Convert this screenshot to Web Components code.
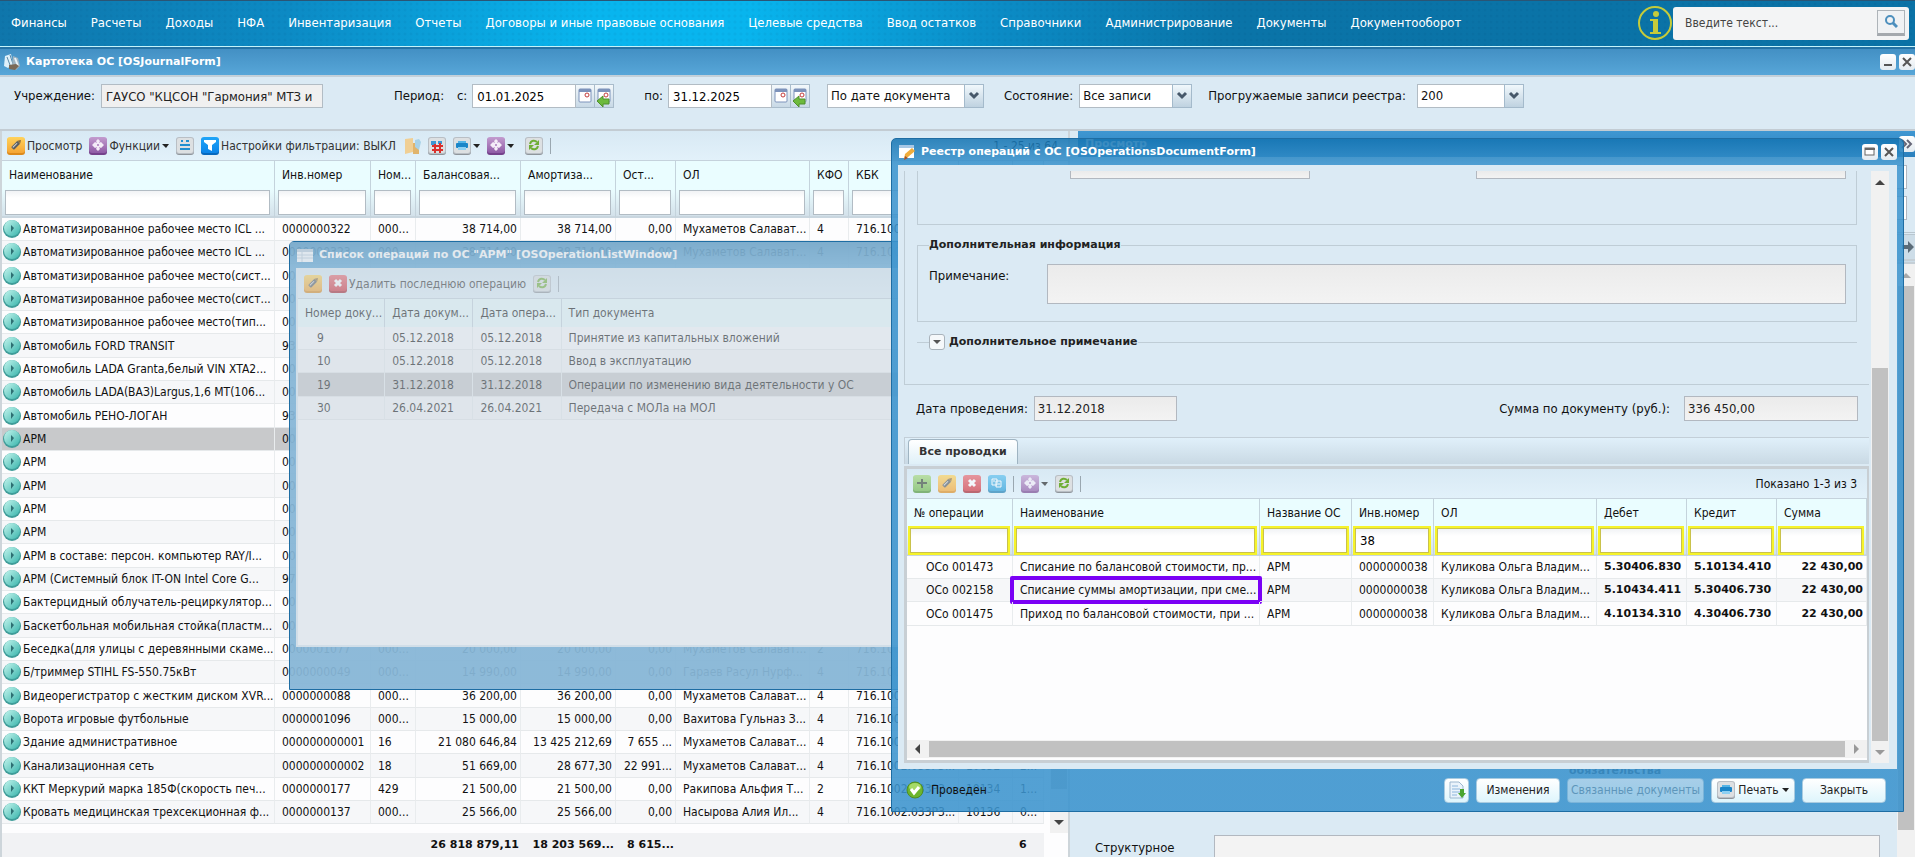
<!DOCTYPE html>
<html lang="ru">
<head>
<meta charset="utf-8">
<title>Картотека ОС</title>
<style>
  html, body{
    height: 100%;
    margin: 0;
  }
  body{
    overflow: hidden;
    font: 12px/16px "DejaVu Sans Condensed", "DejaVu Sans", sans-serif;
    color: #111;
    background: #dbeaf4;
  }
</style>
</head>
<body>
<app-desktop></app-desktop>

<script>
const ICONS = {
  base: (top, bottom, edge, mark) => `
    <defs><linearGradient id="g" x1="0" y1="0" x2="0" y2="1"><stop offset="0" stop-color="${top}"/><stop offset="1" stop-color="${bottom}"/></linearGradient></defs>
    <rect x="0" y="1" width="18" height="17" rx="3" fill="${edge}"/>
    <rect x="0" y="0" width="18" height="16" rx="3" fill="url(#g)"/>${mark}`,
};
const grayBase = mark => `
    <rect x="0" y="1" width="18" height="17" rx="3" fill="#8f959b"/>
    <rect x="0" y="0" width="18" height="17" rx="3" fill="#b9bfc5"/>
    <rect x="1" y="1" width="16" height="15" rx="2" fill="#dde0e2"/>${mark}`;

ICONS.edit = ICONS.base('#ffd35c', '#f5a535', '#dd8a1c', '<g transform="rotate(-45 9 8)"><rect x="4" y="6" width="9" height="4" rx="1" fill="#5b5f63"/><rect x="5" y="7" width="6" height="1" fill="#d8d8d8"/><path d="M13 6l3 2-3 2z" fill="#8a6a3a"/></g>');
ICONS.func = ICONS.base('#c39ccf', '#8f5aa5', '#75418b', '<path d="M9 2l2 2-1 2 2-1 3 3-3 3-2-1 1 2-2 2-2-2 1-2-2 1-3-3 3-3 2 1-1-2z" fill="#f4ecf7"/><circle cx="9" cy="8" r="1" fill="#a878bb"/>');
ICONS.add = ICONS.base('#a8d87e', '#6fb54a', '#4f9434', '<path d="M9 4v9M4 8h10" stroke="#3d4b38" stroke-width="2"/>');
ICONS.remove = ICONS.base('#ec6a70', '#d3323c', '#a81f2a', '<path d="M6 5l6 6M12 5l-6 6" stroke="#fff" stroke-width="3"/>');
ICONS.copy = ICONS.base('#5cc0ee', '#259bd6', '#1b7cb0', '<path d="M4 4h5v6H4zM8 6h5v6H8z" fill="#4db0e0" stroke="#fff"/><path d="M5 6h2M10 9h2" stroke="#fff"/>');
ICONS.filter = ICONS.base('#1fa5f8', '#0b84e8', '#0668bd', '<path d="M3 3h12v2l-4 3v6l-4-2V8L3 5z" fill="#fff"/>');
ICONS.list = grayBase('<path d="M5 4h2M10 4h3" stroke="#1f8fd0" stroke-width="2"/><path d="M4 8h10M4 12h10" stroke="#1f8fd0" stroke-width="2"/>');
ICONS.table = grayBase('<path d="M3 4h5v4H3zM10 4h4v3h-4z" fill="#3a97d3"/><path d="M7 7v9M12 6v10M4 9h11M4 13h11" stroke="#d9302c" stroke-width="2"/>');
ICONS.print = grayBase('<path d="M5 4h8v2H5z" fill="#55b4e6"/><rect x="3" y="6" width="12" height="5" rx="1" fill="#1b86c8"/><path d="M5 10h8v3H5z" fill="#8ed0f2"/>');
ICONS.refresh = grayBase('<path d="M5 7c1-4 5-4 7-2M13 9c-1 4-5 4-7 2" fill="none" stroke="#6fae35" stroke-width="2"/><path d="M14 3v5H9zM4 13V8h5z" fill="#6fae35"/>');
ICONS.folder = '<path d="M2 2l8-1v14l-8 2z" fill="#f0cf94"/><path d="M10 6h6v11H10z" fill="#e0b46c"/><path d="M12 3l4-1 2 3-2 8-4-3z" fill="#a9d2e8"/>';
ICONS.go = '<defs><linearGradient id="g" x1="0" y1="0" x2="1" y2="1"><stop offset="0" stop-color="#c6f5ee"/><stop offset="1" stop-color="#39b5ac"/></linearGradient></defs><circle cx="9" cy="9" r="9" fill="#3f9c99"/><circle cx="9" cy="8" r="8" fill="url(#g)"/><path d="M8 5l3 3-3 4z" fill="#2d6f72"/>';
ICONS.ok = '<circle cx="9" cy="9" r="8" fill="#6cb52d" stroke="#4f8d22"/><ellipse cx="9" cy="6" rx="6" ry="4" fill="#a5da68"/><path d="M5 8l3 4 5-6" fill="none" stroke="#fff" stroke-width="3"/>';
ICONS.cabinet = '<path d="M2 3l6-2 2 10-5 4-4-2z" fill="#dff0fa"/><path d="M4 4l3 8M7 2l3 9" stroke="#5b8aa8"/><path d="M10 3l5 2 2 8-4 4-4-3z" fill="#9fb4c2"/><path d="M12 5l3 8" stroke="#e9f2f8" stroke-width="2"/><path d="M6 12l7-1 3 2-4 4-6-1z" fill="#7b6a58"/>';
ICONS.form = '<rect x="1" y="2" width="15" height="13" fill="#fff"/><rect x="1" y="2" width="15" height="3" fill="#a8c8e6"/><path d="M6 16l1-5 7-6 3 3-7 6z" fill="#f0ad3c"/><path d="M6 17l1-4 3 2z" fill="#a0522d"/>';
ICONS.sheet = '<rect x="1" y="3" width="16" height="13" fill="#f7fbff"/><rect x="1" y="3" width="16" height="3" fill="#b4c9da"/><path d="M1 9h16M1 12h16M6 6v10" stroke="#b8cbd9"/>';
ICONS.export = '<path d="M2 1h9l4 4v12H2z" fill="#eaf3fb" stroke="#9db8cf"/><path d="M4 5h6M4 8h8M4 11h8M4 14h5" stroke="#8cb6dc"/><path d="M12 8h4v4h2l-4 5-4-5h2z" fill="#4aa52e"/>';

const CARET = '<svg class="caret" width="7" height="4" viewBox="0 0 7 4"><path d="M0 0h7L4 4z" fill="#222"/></svg>';

class AppIcon extends HTMLElement{
  connectedCallback(){
    const shadowRoot = this.attachShadow({mode:'open'});
    shadowRoot.innerHTML = `
    <style>
      :host{ display: block; flex: none; width: 18px; height: 18px; }
      svg{ display: block; }
    </style>
    <svg width="18" height="18" viewBox="0 0 18 18">${ICONS[this.getAttribute('name')]}</svg>`;
  }
}
customElements.define('app-icon', AppIcon);

class ToolButton extends HTMLElement{
  connectedCallback(){
    const shadowRoot = this.attachShadow({mode:'open'});
    const off = this.hasAttribute('off');
    shadowRoot.innerHTML = `
    <style>
      :host{ display: block; flex: none; }
      button{
        display: flex;
        align-items: center;
        gap: 2px;
        padding: 0;
        border: 0;
        background: none;
        font: inherit;
        color: #333;
        white-space: nowrap;
      }
      button:disabled{ opacity: .65; }
    </style>
    <button type="button" ${off ? 'disabled' : ''}>
      <app-icon name="${this.getAttribute('icon')}"></app-icon>
      <slot></slot>
      ${this.hasAttribute('menu') ? CARET : ''}
    </button>`;
  }
}
customElements.define('tool-button', ToolButton);

class ToolBar extends HTMLElement{
  connectedCallback(){
    const shadowRoot = this.attachShadow({mode:'open'});
    shadowRoot.innerHTML = `
    <style>
      :host{
        display: flex;
        align-items: center;
        gap: 7px;
        flex: none;
        box-sizing: border-box;
        height: 30px;
        padding: 0 6px;
        border-bottom: 1px solid #c5d2dc;
        background: linear-gradient(#d8e9f4, #e2f1fa);
      }
      ::slotted(hr){
        width: 1px;
        height: 16px;
        margin: 0;
        border: 0;
        background: #9aa7b0;
      }
      ::slotted(output){
        margin-left: auto;
        padding-right: 4px;
      }
    </style>
    <slot></slot>`;
  }
}
customElements.define('tool-bar', ToolBar);

class ScrollBar extends HTMLElement{
  connectedCallback(){
    const shadowRoot = this.attachShadow({mode:'open'});
    const flat = this.hasAttribute('horizontal');
    const [before, thumb, after] = this.getAttribute('track').split(' ');
    const [first, last] = (this.getAttribute('arrows') || '#444 #999').split(' ');
    shadowRoot.innerHTML = `
    <style>
      :host{
        display: flex;
        flex-direction: ${flat ? 'row' : 'column'};
        flex: none;
        ${flat ? 'height' : 'width'}: 18px;
        background: #f1f1f1;
      }
      svg{ flex: none; margin: ${flat ? '0 2px' : '2px 0'}; }
      .thumb{ background: #c1c1c1; flex: ${thumb}; margin: ${flat ? '1px 0' : '0 1px'}; }
    </style>
    <svg width="18" height="18" viewBox="0 0 18 18"><path d="${flat ? 'M11 4v10L6 9z' : 'M4 12h10L9 7z'}" fill="${first}"/></svg>
    <div style="flex:${before}"></div>
    <div class="thumb"></div>
    <div style="flex:${after}"></div>
    <svg width="18" height="18" viewBox="0 0 18 18"><path d="${flat ? 'M7 4v10l5-5z' : 'M4 7h10l-5 5z'}" fill="${last}"/></svg>`;
  }
}
customElements.define('scroll-bar', ScrollBar);

class TopMenu extends HTMLElement{
  connectedCallback(){
    const shadowRoot = this.attachShadow({mode:'open'});
    const items = ['Финансы', 'Расчеты', 'Доходы', 'НФА', 'Инвентаризация', 'Отчеты', 'Договоры и иные правовые основания', 'Целевые средства', 'Ввод остатков', 'Справочники', 'Администрирование', 'Документы', 'Документооборот'];
    const html = `
    <nav>${items.map(item => `<a href="#">${item}</a>`).join('')}</nav>
    <svg class="info" width="34" height="34" viewBox="0 0 34 34">
      <circle cx="17" cy="17" r="16" fill="none" stroke="#c5cb3a" stroke-width="2"/>
      <circle cx="18" cy="8" r="3" fill="#c5cb3a"/>
      <path d="M12 13h8v13h3v2H12v-2h3V15h-3z" fill="#c5cb3a"/>
    </svg>
    <form>
      <input type="text" placeholder="Введите текст...">
      <button type="button"><svg width="14" height="14" viewBox="0 0 14 14"><circle cx="6" cy="5" r="4" fill="none" stroke="#4d8fbd" stroke-width="2"/><path d="M9 8l4 4" stroke="#4d8fbd" stroke-width="3"/></svg></button>
    </form>`;
    const css = `
    <style>
      :host{
        display: flex;
        align-items: center;
        flex: none;
        box-sizing: border-box;
        height: 49px;
        padding: 0 6px 2px 11px;
        border-top: 1px solid #2a5575;
        border-bottom: 2px solid #2472a4;
        background:
          linear-gradient(#c4f4fb, #c4f4fb) 0 100% / 100% 1px no-repeat,
          radial-gradient(rgba(0, 40, 90, .05) 1px, transparent 2px) 0 0 / 6px 6px,
          linear-gradient(100deg, #0f76ab 0%, #0c8ac4 15%, #08b5ee 31%, #08b5ee 39%, #0b8cc6 52%, #0a74a8 64%, #0a72a6 100%);
      }
      nav{ display: flex; gap: 24px; flex: 1; }
      a{
        color: #fff;
        font-size: 13px;
        text-decoration: none;
        white-space: nowrap;
      }
      form{
        display: flex;
        align-items: center;
        box-sizing: border-box;
        width: 236px;
        height: 33px;
        margin-left: 1px;
        padding: 0 4px 0 12px;
        border-radius: 3px;
        background: #f3f4f5;
      }
      input{
        flex: 1;
        min-width: 0;
        padding: 0;
        border: 0;
        background: none;
        font: inherit;
      }
      input::placeholder{ color: #444; }
      button{
        display: grid;
        place-items: center;
        width: 28px;
        height: 26px;
        padding: 0;
        border: 1px solid #aeb4b9;
        border-bottom: 3px solid #a4a9ae;
        background: #f0f2f4;
      }
    </style>`;
    shadowRoot.innerHTML = html + css;
  }
}
customElements.define('top-menu', TopMenu);

/* White square buttons of the window headers */
const GLYPHS = {
  min: '<path d="M4 11h8" stroke="#555" stroke-width="2"/>',
  max: '<rect x="3" y="4" width="9" height="7" fill="#fff" stroke="#666"/><path d="M3 5h10" stroke="#666" stroke-width="2"/>',
  close: '<path d="M4 4l8 8M12 4l-8 8" stroke="#555" stroke-width="2"/>',
  expand: '<path d="M3 4l4 4-4 4M8 4l4 4-4 4" fill="none" stroke="#667" stroke-width="2"/>',
};

class TitleBar extends HTMLElement{
  connectedCallback(){
    const shadowRoot = this.attachShadow({mode:'open'});
    const icon = this.getAttribute('icon');
    const tools = (this.getAttribute('tools') || '').split(' ').filter(Boolean);
    shadowRoot.innerHTML = `
    <style>
      :host{
        display: flex;
        align-items: center;
        gap: 3px;
        flex: none;
        box-sizing: border-box;
        height: 26px;
        color: #fff;
        font: bold 11px/16px "DejaVu Sans", sans-serif;
      }
      h1{ flex: 1; margin: 0; font: inherit; padding-left: 2px; }
      button{
        width: 16px;
        height: 16px;
        padding: 0;
        border: 0;
        border-radius: 3px;
        background: linear-gradient(#fff, #e3ebf1);
      }
      svg{ display: block; }
    </style>
    ${icon ? `<app-icon name="${icon}"></app-icon>` : ''}
    <h1><slot></slot></h1>
    ${tools.map(t => `<button type="button"><svg width="16" height="16" viewBox="0 0 16 16">${GLYPHS[t]}</svg></button>`).join('')}`;
  }
}
customElements.define('title-bar', TitleBar);

class DateField extends HTMLElement{
  connectedCallback(){
    const shadowRoot = this.attachShadow({mode:'open'});
    const sheet = '<rect x="3" y="4" width="12" height="13" rx="1" fill="#fff" stroke="#7d93bb"/><rect x="3" y="4" width="12" height="3" fill="#7d93bb"/><circle cx="11" cy="10" r="2" fill="#fff" stroke="#c23a3a"/>';
    shadowRoot.innerHTML = `
    <style>
      :host{ display: flex; align-items: center; gap: 5px; flex: none; font-size: 13px; }
      div{ display: flex; }
      input{
        box-sizing: border-box;
        width: 104px;
        height: 24px;
        padding: 0 4px;
        border: 1px solid #b2bcc4;
        font: inherit;
      }
      button{
        box-sizing: border-box;
        width: 19px;
        height: 24px;
        padding: 0;
        border: 1px solid #a9bccb;
        border-left: 0;
        background: linear-gradient(#f3f8fb, #c8d9e6);
      }
      svg{ display: block; }
    </style>
    <label for="date">${this.getAttribute('label')}</label>
    <div>
      <input id="date" type="text" value="${this.getAttribute('value')}">
      <button type="button"><svg width="18" height="22" viewBox="0 0 18 22">${sheet}</svg></button>
      <button type="button"><svg width="18" height="22" viewBox="0 0 18 22">${sheet}<path d="M2 16l6-5v3h6v5H8v3z" fill="#6dba3c" stroke="#4f8f2c"/></svg></button>
    </div>`;
  }
}
customElements.define('date-field', DateField);

class ComboField extends HTMLElement{
  connectedCallback(){
    const shadowRoot = this.attachShadow({mode:'open'});
    const label = this.getAttribute('label');
    shadowRoot.innerHTML = `
    <style>
      :host{ display: flex; align-items: center; gap: 6px; flex: none; font-size: 13px; }
      div{ display: grid; width: var(--combo-width); }
      select, svg{ grid-area: 1 / 1; }
      select{
        appearance: none;
        box-sizing: border-box;
        width: 100%;
        height: 24px;
        padding: 0 20px 0 3px;
        border: 1px solid #b2bcc4;
        border-radius: 0;
        background: #fff;
        font: inherit;
        color: inherit;
      }
      svg{ justify-self: end; pointer-events: none; }
    </style>
    ${label ? `<label for="combo">${label}</label>` : ''}
    <div>
      <select id="combo"><option>${this.getAttribute('value')}</option></select>
      <svg width="20" height="24" viewBox="0 0 20 24">
        <defs><linearGradient id="g" x1="0" y1="0" x2="0" y2="1"><stop offset="0" stop-color="#f1f8fc"/><stop offset="1" stop-color="#bfd2e0"/></linearGradient></defs>
        <path d="M0 0h20v24H0z" fill="#a4bacb"/><path d="M1 1h18v22H1z" fill="url(#g)"/>
        <path d="M6 9l4 4 4-4" fill="none" stroke="#47586a" stroke-width="3"/>
      </svg>
    </div>`;
  }
}
customElements.define('combo-field', ComboField);

class FilterBar extends HTMLElement{
  connectedCallback(){
    const shadowRoot = this.attachShadow({mode:'open'});
    shadowRoot.innerHTML = `
    <style>
      :host{
        display: flex;
        align-items: flex-start;
        flex: none;
        box-sizing: border-box;
        height: 56px;
        padding: 7px 0 0 14px;
        border-top: 2px solid #c3d0d9;
        border-bottom: 2px solid #c3ccd3;
        background: #dbeaf4;
        font-size: 13px;
        white-space: nowrap;
      }
      .org{ display: flex; align-items: center; gap: 6px; margin-right: 71px; }
      .org input{
        box-sizing: border-box;
        width: 222px;
        height: 24px;
        padding: 0 4px;
        border: 1px solid #b2bcc4;
        background: #f0f0f0;
        font: inherit;
        color: #222;
      }
      .period{ line-height: 24px; width: 63px; }
      .to{ margin: 0 17px 0 30px; }
      .by{ --combo-width: 157px; margin-right: 20px; }
      .state{ --combo-width: 113px; margin-right: 16px; }
      .rows{ --combo-width: 107px; gap: 11px; }
    </style>
    <div class="org">
      <label for="org">Учреждение:</label>
      <input id="org" type="text" value='ГАУСО "КЦСОН "Гармония" МТЗ и' readonly>
    </div>
    <span class="period">Период:</span>
    <date-field label="с:" value="01.01.2025"></date-field>
    <date-field class="to" label="по:" value="31.12.2025"></date-field>
    <combo-field class="by" value="По дате документа"></combo-field>
    <combo-field class="state" label="Состояние:" value="Все записи"></combo-field>
    <combo-field class="rows" label="Прогружаемые записи реестра:" value="200"></combo-field>`;
  }
}
customElements.define('filter-bar', FilterBar);

const KBK = '716.1002.033Р3...';
const ARM = 'АРМ';
const GRIDS = {
  assets: {
    columns: [
      ['Наименование', 273], ['Инв.номер', 96], ['Ном...', 45], ['Балансовая...', 105, 'num'], ['Амортиза...', 95, 'num'],
      ['Ост...', 60, 'num'], ['ОЛ', 134], ['КФО', 39], ['КБК', 110], ['', 54], ['', 31],
    ],
    filters: true,
    icon: 'go',
    selected: 9,
    rows: [
      ['Автоматизированное рабочее место ICL ...', '0000000322', '000...', '38 714,00', '38 714,00', '0,00', 'Мухаметов Салават...', '4', KBK],
      ['Автоматизированное рабочее место ICL ...', '0000000323', '000...', '38 714,00', '38 714,00', '0,00', 'Мухаметов Салават...', '4', KBK],
      ['Автоматизированное рабочее место(сист...', '00'],
      ['Автоматизированное рабочее место(сист...', '00'],
      ['Автоматизированное рабочее место(тип...', '00'],
      ['Автомобиль FORD TRANSIT', '93'],
      ['Автомобиль LADA Granta,белый VIN XTA2...', '00'],
      ['Автомобиль LADA(ВАЗ)Largus,1,6 МТ(106...', '00'],
      ['Автомобиль РЕНО-ЛОГАН', '93'],
      [ARM, '00'], [ARM, '00'], [ARM, '00'], [ARM, '00'], [ARM, '00'],
      ['АРМ в составе: персон. компьютер RAY/I...', '00'],
      ['АРМ (Системный блок IT-ON Intel Core G...', '97'],
      ['Бактерцидный облучатель-рециркулятор...', '00'],
      ['Баскетбольная мобильная стойка(пластм...', '00'],
      ['Беседка(для улицы с деревянными скаме...', '0000001077', '000...', '20 000,00', '20 000,00', '0,00', 'Мухаметов Салават...', '2', KBK],
      ['Б/триммер STIHL FS-550.75кВт', '0000000049', '000...', '14 990,00', '14 990,00', '0,00', 'Гараев Расул Нурф...', '4', KBK],
      ['Видеорегистратор с жестким диском XVR...', '0000000088', '000...', '36 200,00', '36 200,00', '0,00', 'Мухаметов Салават...', '4', KBK],
      ['Ворота игровые футбольные', '0000001096', '000...', '15 000,00', '15 000,00', '0,00', 'Вахитова Гульназ З...', '4', KBK],
      ['Здание административное', '000000000001', '16', '21 080 646,84', '13 425 212,69', '7 655 ...', 'Мухаметов Салават...', '4', KBK],
      ['Канализационная сеть', '000000000002', '18', '51 669,00', '28 677,30', '22 991...', 'Мухаметов Салават...', '4', KBK, '10852', '2...'],
      ['ККТ Меркурий марка 185Ф(скорость печ...', '0000000177', '429', '21 500,00', '21 500,00', '0,00', 'Ракипова Альфия Т...', '2', KBK, '10134', '1...'],
      ['Кровать медицинская трехсекционная ф...', '0000000137', '000...', '25 566,00', '25 566,00', '0,00', 'Насырова Алия Ил...', '4', KBK, '10136', '0...'],
    ],
    totals: ['', '', '', '26 818 879,11', '18 203 569...', '8 615...', '', '', '', '', '6'],
  },
  operations: {
    columns: [['Номер доку...', 87, 'shift'], ['Дата докум...', 88], ['Дата опера...', 88], ['Тип документа', 617]],
    selected: 2,
    rows: [
      ['9', '05.12.2018', '05.12.2018', 'Принятие из капитальных вложений'],
      ['10', '05.12.2018', '05.12.2018', 'Ввод в эксплуатацию'],
      ['19', '31.12.2018', '31.12.2018', 'Операции по изменению вида деятельности у ОС'],
      ['30', '26.04.2021', '26.04.2021', 'Передача с МОЛа на МОЛ'],
    ],
  },
  entries: {
    columns: [
      ['№ операции', 106, 'shift'], ['Наименование', 247], ['Название ОС', 92], ['Инв.номер', 82], ['ОЛ', 163],
      ['Дебет', 90, 'bold'], ['Кредит', 90, 'bold'], ['Сумма', 90, 'num bold'],
    ],
    filters: true,
    values: {3: '38'},
    mark: [1, 1],
    rows: [
      ['ОСо 001473', 'Списание по балансовой стоимости, пр...', ARM, '0000000038', 'Куликова Ольга Владим...', '5.30406.830', '5.10134.410', '22 430,00'],
      ['ОСо 002158', 'Списание суммы амортизации, при сме...', ARM, '0000000038', 'Куликова Ольга Владим...', '5.10434.411', '5.30406.730', '22 430,00'],
      ['ОСо 001475', 'Приход по балансовой стоимости, при ...', ARM, '0000000038', 'Куликова Ольга Владим...', '4.10134.310', '4.30406.730', '22 430,00'],
    ],
  },
};

class DataGrid extends HTMLElement{
  connectedCallback(){
    const shadowRoot = this.attachShadow({mode:'open'});
    const grid = GRIDS[this.getAttribute('source')];
    const cols = grid.columns;
    const cell = (text, r, c) => {
      const marked = grid.mark && grid.mark[0] === r && grid.mark[1] === c;
      const icon = grid.icon && c === 0 ? `<app-icon name="${grid.icon}"></app-icon>` : '';
      return `<td class="${cols[c][2] || ''}${icon ? ' lead' : ''}"><div>${icon}<span>${text || ''}</span></div>${marked ? '<i></i>' : ''}</td>`;
    };
    const html = `
    <table>
      <colgroup>${cols.map(c => `<col style="width:${c[1]}px">`).join('')}</colgroup>
      <thead>
        <tr>${cols.map((c, i) => `<th id="h${i}">${c[0]}</th>`).join('')}</tr>
        ${grid.filters ? `<tr class="filters">${cols.map((c, i) => `<td><input type="text" aria-labelledby="h${i}" value="${(grid.values || {})[i] || ''}"></td>`).join('')}</tr>` : ''}
      </thead>
      <tbody>
        ${grid.rows.map((row, r) => `<tr class="${grid.selected === r ? 'selected' : ''}">${cols.map((c, i) => cell(row[i], r, i)).join('')}</tr>`).join('')}
      </tbody>
      ${grid.totals ? `<tfoot><tr class="gap"><td colspan="${cols.length}"></td></tr><tr>${grid.totals.map(t => `<td>${t}</td>`).join('')}</tr></tfoot>` : ''}
    </table>`;
    const css = `
    <style>
      :host{ display: block; background: #fdfdfe; overflow: hidden; }
      table{
        width: 100%;
        table-layout: fixed;
        border-collapse: separate;
        border-spacing: 0;
        white-space: nowrap;
      }
      th, td{ box-sizing: border-box; padding: 0 3px 0 7px; }
      th{
        height: var(--header-row, 28px);
        border-right: 1px solid #c4d3dc;
        background: #eafdff;
        font-weight: normal;
        text-align: left;
        overflow: hidden;
      }
      .filters td{
        height: 29px;
        padding: 0 4px 1px 3px;
        border-right: 1px solid #c4d3dc;
        border-bottom: 2px solid #c9d6df;
        background: linear-gradient(#eafdff, #d3e1ea);
      }
      input{
        display: block;
        box-sizing: border-box;
        width: 100%;
        height: 25px;
        padding: 0 4px;
        border: 1px solid #b2bcc4;
        background: linear-gradient(#f1f3f5, #fff 30%);
        font: inherit;
        font-size: 13px;
      }
      :host([highlight]) input{
        border-color: #c9c24c;
        outline: 2px solid #f6f32a;
      }
      tbody tr{ height: 23px; background: #fdfdfe; }
      tbody tr:nth-child(3n){ height: 24px; }
      tbody tr:nth-child(even){ background: #f6f7f9; }
      tbody tr.selected{ background: #c8c9cb; }
      tbody td{
        position: relative;
        border-right: 1px solid #e9ecee;
        border-bottom: 1px solid #e6e9eb;
      }
      tbody div{ display: flex; align-items: center; gap: 2px; overflow: hidden; }
      td.lead{ padding: 0 0 0 1px; }
      td.shift{ padding-left: 19px; }
      td.num div{ justify-content: flex-end; }
      td.bold{ font: bold 11px/16px "DejaVu Sans", sans-serif; }
      i{
        position: absolute;
        inset: -3px;
        box-sizing: border-box;
        border: 4px solid #7a00f5;
        border-radius: 2px;
      }
      .gap td{ height: 9px; background: #fdfdfe; }
      tfoot td{
        height: 24px;
        padding: 0 2px;
        background: #f1f2f4;
        font: bold 11px/16px "DejaVu Sans", sans-serif;
        text-align: right;
        overflow: hidden;
      }
      tfoot td:last-child{ padding-left: 6px; text-align: left; }
    </style>`;
    shadowRoot.innerHTML = html + css;
  }
}
customElements.define('data-grid', DataGrid);

class AppWindow extends HTMLElement{
  connectedCallback(){
    const shadowRoot = this.attachShadow({mode:'open'});
    shadowRoot.innerHTML = `
    <style>
      :host{
        position: absolute;
        display: flex;
        flex-direction: column;
        box-sizing: border-box;
        padding: 0 6px;
        border: 1px solid #1e6da3;
        border-radius: 5px 5px 0 0;
        background: linear-gradient(rgba(20, 116, 178, .86), rgba(60, 148, 206, .88) 26px);
      }
      .body{
        flex: 1;
        display: flex;
        flex-direction: column;
        min-height: 0;
        background: #dbeaf4;
      }
      footer{
        display: flex;
        align-items: center;
        flex: none;
        height: 42px;
        padding: 0 11px 0 8px;
        gap: 7px;
      }
      .mask{ display: none; }
      :host([inactive]) .mask{
        display: block;
        position: absolute;
        inset: 0;
        background: rgba(200, 212, 222, .5);
      }
    </style>
    <title-bar icon="${this.getAttribute('icon')}" tools="${this.getAttribute('tools') || ''}">${this.getAttribute('caption')}</title-bar>
    <div class="body"><slot></slot></div>
    <footer><slot name="footer"></slot></footer>
    <div class="mask"></div>`;
  }
}
customElements.define('app-window', AppWindow);

class PushButton extends HTMLElement{
  connectedCallback(){
    const shadowRoot = this.attachShadow({mode:'open'});
    const icon = this.getAttribute('icon');
    shadowRoot.innerHTML = `
    <style>
      :host{ display: block; flex: none; }
      button{
        display: flex;
        align-items: center;
        justify-content: center;
        gap: 3px;
        box-sizing: border-box;
        width: 100%;
        height: 25px;
        padding: 0 3px;
        border: 1px solid #a9cbe0;
        border-radius: 4px;
        background: linear-gradient(#fff, #def5fc);
        font: inherit;
        font-size: 12px;
        color: #222;
        white-space: nowrap;
      }
      button:disabled{ opacity: .5; color: #6d8ea4; }
    </style>
    <button type="button" ${this.hasAttribute('off') ? 'disabled' : ''}>
      ${icon ? `<app-icon name="${icon}"></app-icon>` : ''}<slot></slot>${this.hasAttribute('menu') ? CARET : ''}
    </button>`;
  }
}
customElements.define('push-button', PushButton);

class DocumentForm extends HTMLElement{
  connectedCallback(){
    const shadowRoot = this.attachShadow({mode:'open'});
    const html = `
    <div class="content">
      <section>
        <div class="cut"><input type="text" readonly><input type="text" readonly></div>
        <fieldset>
          <legend>Дополнительная информация</legend>
          <label for="note">Примечание:</label>
          <textarea id="note" readonly></textarea>
        </fieldset>
        <fieldset class="closed">
          <legend><button type="button"><svg width="14" height="14" viewBox="0 0 14 14"><path d="M3 5h8l-4 4z" fill="#555"/></svg></button>Дополнительное примечание</legend>
        </fieldset>
      </section>
      <div class="sums">
        <label for="date">Дата проведения:</label>
        <input id="date" type="text" value="31.12.2018" readonly>
        <label class="right" for="sum">Сумма по документу (руб.):</label>
        <input class="wide" id="sum" type="text" value="336 450,00" readonly>
      </div>
      <div class="tabs"><button type="button">Все проводки</button></div>
      <div class="panel">
        <tool-bar>
          <tool-button icon="add" off></tool-button>
          <tool-button icon="edit" off></tool-button>
          <tool-button icon="remove" off></tool-button>
          <tool-button icon="copy" off></tool-button>
          <hr>
          <tool-button icon="func" menu off></tool-button>
          <tool-button icon="refresh"></tool-button>
          <hr>
          <output>Показано 1-3 из 3</output>
        </tool-bar>
        <data-grid source="entries" highlight></data-grid>
        <scroll-bar horizontal track="0 917 0"></scroll-bar>
      </div>
    </div>
    <scroll-bar track="176 375 0"></scroll-bar>`;
    const css = `
    <style>
      :host{
        display: flex;
        flex: 1;
        min-height: 0;
        padding: 6px 8px 6px 6px;
        font-size: 13px;
      }
      .content{ flex: 1; display: flex; flex-direction: column; min-width: 0; margin-right: 2px; }
      section{
        flex: none;
        padding: 0 12px;
        border: solid #bfcdd6;
        border-width: 0 0 1px 1px;
      }
      .cut{
        display: grid;
        grid-template-columns: 240px 370px;
        justify-content: space-between;
        align-items: start;
        box-sizing: border-box;
        height: 54px;
        padding: 0 10px 0 152px;
        border: 1px solid #bfcdd6;
        border-top: 0;
      }
      input, textarea{
        box-sizing: border-box;
        margin: 0;
        border: 1px solid #b2b8c0;
        background: linear-gradient(#ebebeb, #f3f3f3);
        font: inherit;
        color: #222;
        resize: none;
      }
      .cut input{ width: 100%; height: 8px; border-top: 0; }
      fieldset{
        display: flex;
        gap: 0;
        margin: 12px 0 0;
        padding: 11px 10px 17px 11px;
        border: 1px solid #bfcdd6;
      }
      legend{
        display: flex;
        align-items: center;
        gap: 4px;
        height: 16px;
        padding: 0;
        font: bold 11px/16px "DejaVu Sans", sans-serif;
        color: #222;
      }
      legend button{
        width: 16px;
        height: 16px;
        padding: 0;
        border: 1px solid #a9b3bb;
        border-radius: 3px;
        background: #f5f8fa;
      }
      legend svg{ display: block; }
      fieldset label{ width: 118px; padding-top: 4px; }
      textarea{ flex: 1; height: 40px; }
      .closed{ border-width: 1px 0 0; padding-bottom: 23px; padding-left: 12px; }
      .sums{ display: flex; align-items: center; gap: 6px; flex: none; padding: 11px 11px 16px 12px; }
      .sums input{ width: 143px; height: 25px; padding: 0 3px; }
      .sums .wide{ width: 174px; }
      .right{ margin: 0 8px 0 auto; }
      .tabs{
        flex: none;
        padding: 1px 3px 0;
        margin-bottom: 2px;
        border: solid #c3cfd8;
        border-width: 1px 0 0 1px;
        background: linear-gradient(#e0f0fa, #c9d9e4);
      }
      .tabs button{
        display: block;
        height: 25px;
        padding: 0 10px;
        border: 1px solid #9fb4c2;
        border-bottom: 0;
        border-radius: 4px 4px 0 0;
        background: linear-gradient(#fff, #dff0f8);
        font: bold 11px/16px "DejaVu Sans", sans-serif;
        color: #333;
      }
      .panel{
        flex: 1;
        display: flex;
        flex-direction: column;
        min-height: 0;
        border: 3px solid #c8cfd4;
        border-right-width: 2px;
        font-size: 12px;
      }
      data-grid{ flex: 1; }
      scroll-bar[horizontal]{ border-bottom: 2px solid #fdfdfe; }
    </style>`;
    shadowRoot.innerHTML = html + css;
  }
}
customElements.define('document-form', DocumentForm);

class SidePanel extends HTMLElement{
  connectedCallback(){
    const shadowRoot = this.attachShadow({mode:'open'});
    shadowRoot.innerHTML = `
    <style>
      :host{ display: flex; flex-direction: column; min-width: 0; font-size: 13px; }
      title-bar{ padding: 0 0 0 5px; background: linear-gradient(#3f97d2, #2a80bd); }
      .filters{
        display: grid;
        gap: 7px;
        padding: 8px 8px 12px;
        border-bottom: 3px double #b9c6cf;
      }
      input, textarea{
        box-sizing: border-box;
        margin: 0;
        border: 1px solid #b2b8c0;
        background: #f3f3f3;
        resize: none;
      }
      .filters input{ height: 24px; background: #fff; }
      .pager{
        display: flex;
        justify-content: flex-end;
        align-items: center;
        flex: none;
        height: 24px;
        border-bottom: 5px double #c5cfd6;
        background: #cddde8;
      }
      .view{ flex: 1; display: flex; min-height: 0; }
      form{
        flex: 1;
        display: flex;
        flex-direction: column;
        justify-content: flex-end;
        gap: 56px;
        padding: 0 17px;
      }
      b{ align-self: flex-end; width: 311px; font: bold 11px/16px "DejaVu Sans", sans-serif; color: #123; }
      .row{ display: flex; }
      .row label{ width: 119px; padding-top: 5px; }
      textarea{ flex: 1; height: 22px; border-bottom: 0; }
    </style>
    <title-bar tools="expand">Просмотр</title-bar>
    <div class="filters"><input type="text"><input type="text"></div>
    <div class="pager"><svg width="14" height="14" viewBox="0 0 14 14"><path d="M1 5h6V1l6 6-6 6V9H1z" fill="#5a6b78"/></svg></div>
    <div class="view">
      <form>
        <b>обязательства</b>
        <div class="row"><label for="unit">Структурное</label><textarea id="unit" readonly></textarea></div>
      </form>
      <scroll-bar track="0 546 5" arrows="#aaa #f1f1f1"></scroll-bar>
    </div>`;
  }
}
customElements.define('side-panel', SidePanel);

class AppDesktop extends HTMLElement{
  connectedCallback(){
    const shadowRoot = this.attachShadow({mode:'open'});
    const html = `
    <top-menu></top-menu>
    <title-bar class="main" icon="cabinet" tools="min close">Картотека ОС [OSJournalForm]</title-bar>
    <filter-bar></filter-bar>
    <main>
      <div class="journal">
        <tool-bar>
          <tool-button icon="edit">Просмотр</tool-button>
          <tool-button icon="func" menu>Функции</tool-button>
          <tool-button icon="list"></tool-button>
          <tool-button icon="filter">Настройки фильтрации: ВЫКЛ</tool-button>
          <tool-button icon="folder"></tool-button>
          <tool-button icon="table"></tool-button>
          <tool-button icon="print" menu></tool-button>
          <tool-button icon="func" menu></tool-button>
          <tool-button class="far" icon="refresh"></tool-button>
          <hr>
          <output>1 - 25 из 64</output>
        </tool-bar>
        <div class="rows">
          <data-grid source="assets"></data-grid>
          <scroll-bar track="0 560 20" arrows="#444 #444"></scroll-bar>
        </div>
      </div>
      <side-panel></side-panel>
    </main>
    <app-window class="list" inactive icon="sheet" caption='Список операций по ОС "АРМ" [OSOperationListWindow]'>
      <div class="inner">
        <tool-bar>
          <tool-button icon="edit"></tool-button>
          <tool-button icon="remove">Удалить последнюю операцию</tool-button>
          <tool-button icon="refresh"></tool-button>
          <hr>
        </tool-bar>
        <data-grid source="operations"></data-grid>
      </div>
    </app-window>
    <app-window class="document" icon="form" tools="max close" caption="Реестр операций с ОС [OSOperationsDocumentForm]">
      <document-form></document-form>
      <app-icon slot="footer" name="ok"></app-icon>
      <span slot="footer" class="status">Проведен</span>
      <push-button slot="footer" class="small" icon="export"></push-button>
      <push-button slot="footer" class="medium">Изменения</push-button>
      <push-button slot="footer" class="large" off>Связанные документы</push-button>
      <push-button slot="footer" class="medium" icon="print" menu>Печать</push-button>
      <push-button slot="footer" class="medium">Закрыть</push-button>
    </app-window>`;
    const css = `
    <style>
      :host{
        position: relative;
        display: flex;
        flex-direction: column;
        height: 100vh;
        overflow: hidden;
      }
      .main{
        padding-left: 3px;
        background: linear-gradient(#4390c4, #57a6d8);
      }
      main{
        flex: 1;
        display: grid;
        grid-template-columns: 1070fr 837fr;
        gap: 8px;
        min-height: 0;
      }
      .journal{
        display: flex;
        flex-direction: column;
        box-sizing: border-box;
        min-width: 0;
        min-height: 0;
        border: solid #cdd5da;
        border-width: 0 2px;
        background: #fdfdfe;
      }
      .journal tool-bar{ padding-left: 5px; }
      .rows{ flex: 1; display: flex; min-height: 0; }
      .rows data-grid{ flex: 1; margin-right: 6px; }
      .rows scroll-bar{ align-self: flex-start; height: 672px; }
      .far{ margin-left: 4px; }
      app-window.list{
        top: 241px;
        bottom: 167px;
        left: 289px;
        width: 900px;
      }
      .inner{
        flex: 1;
        display: flex;
        flex-direction: column;
        border: 2px solid #dbe9f2;
      }
      .inner tool-bar{ height: 29px; }
      .inner data-grid{ flex: 1; }
      app-window.document{
        top: 138px;
        right: 11px;
        bottom: 45px;
        left: 891px;
      }
      .status{ flex: 1; }
      .small{ width: 25px; }
      .medium{ width: 84px; }
      .large{ width: 137px; }
    </style>`;
    shadowRoot.innerHTML = html + css;
  }
}
customElements.define('app-desktop', AppDesktop);
</script>
</body>
</html>
